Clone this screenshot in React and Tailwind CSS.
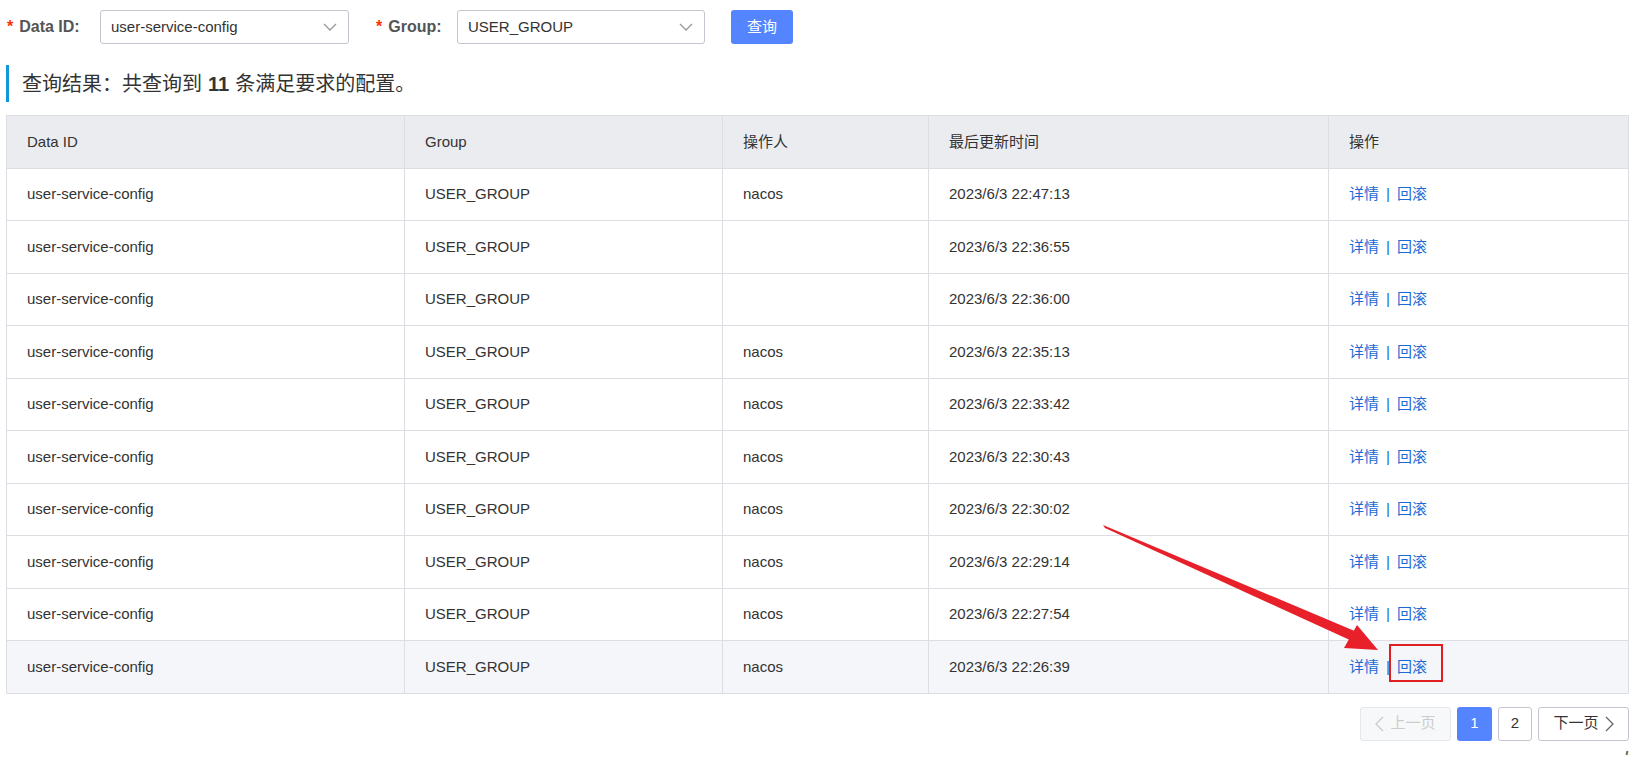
import React from 'react'

const rows = [
  { op: 'nacos', time: '2023/6/3 22:47:13' },
  { op: '', time: '2023/6/3 22:36:55' },
  { op: '', time: '2023/6/3 22:36:00' },
  { op: 'nacos', time: '2023/6/3 22:35:13' },
  { op: 'nacos', time: '2023/6/3 22:33:42' },
  { op: 'nacos', time: '2023/6/3 22:30:43' },
  { op: 'nacos', time: '2023/6/3 22:30:02' },
  { op: 'nacos', time: '2023/6/3 22:29:14' },
  { op: 'nacos', time: '2023/6/3 22:27:54' },
  { op: 'nacos', time: '2023/6/3 22:26:39', hover: true },
]

const Chevron = ({ dir = 'down', className = '' }) => {
  const pts = {
    down: '1,1 7,7 13,1',
    left: '8,1 1,8 8,15',
    right: '1,1 8,8 1,15',
  }[dir]
  const box = dir === 'down' ? '0 0 14 8' : '0 0 9 16'
  return (
    <svg viewBox={box} className={className} fill="none" stroke="currentColor" strokeWidth="1.3">
      <polyline points={pts} />
    </svg>
  )
}

const Select = ({ value, width }) => (
  <div className={`${width} h-[34px] border border-[#c4c6cf] rounded-[3px] flex items-center justify-between pl-[10px] pr-[11px] text-[#333]`}>
    <span>{value}</span>
    <Chevron className="w-[14px] h-[8px] text-[#999]" />
  </div>
)

const cell = 'flex items-center pl-[20px] border-r border-[#dcdee3]'

export default function App() {
  return (
    <div className="relative w-[1652px] h-[757px] bg-white text-[15px] text-[#333] font-['Liberation_Sans','Noto_Sans_CJK_SC',sans-serif]">
      <div className="w-[1623px] ml-[6px] pt-[10px]">
        {/* Search bar */}
        <div className="flex items-center h-[34px]">
          <label className="w-[94px] pl-[1px] text-[16px] font-bold text-[#555]">
            <span className="text-[#ff3000] mr-[6px]">*</span>Data ID:
          </label>
          <Select value="user-service-config" width="w-[249px]" />
          <label className="w-[82px] ml-[26px] pl-[1px] text-[16px] font-bold text-[#555]">
            <span className="text-[#ff3000] mr-[6px]">*</span>Group:
          </label>
          <Select value="USER_GROUP" width="w-[248px]" />
          <button className="ml-[26px] w-[62px] h-[34px] rounded-[3px] bg-[#5584ff] text-white">查询</button>
        </div>

        {/* Result title */}
        <div className="mt-[21px] h-[37px] border-l-[3px] border-[#1296db] pl-[13px] flex items-center text-[20px] text-[#333]">
          查询结果：共查询到 <b className="mx-[6px]">11</b> 条满足要求的配置。
        </div>

        {/* Table */}
        <div className="mt-[13px] border-t border-l border-r border-[#dcdee3]">
          <div className="grid grid-cols-[398px_318px_206px_400px_1fr] h-[52.5px] bg-[#ebecf0] border-b border-[#dcdee3]">
            <div className={cell}>Data ID</div>
            <div className={cell}>Group</div>
            <div className={cell}>操作人</div>
            <div className={cell}>最后更新时间</div>
            <div className="flex items-center pl-[20px]">操作</div>
          </div>
          {rows.map((r, i) => (
            <div
              key={i}
              className={`grid grid-cols-[398px_318px_206px_400px_1fr] h-[52.5px] border-b border-[#dcdee3] ${r.hover ? 'bg-[#f5f6fa]' : 'bg-white'}`}
            >
              <div className={cell}>user-service-config</div>
              <div className={cell}>USER_GROUP</div>
              <div className={cell}>{r.op}</div>
              <div className={cell}>{r.time}</div>
              <div className="flex items-center pl-[20px] text-[#1b6ad6]">
                <span>详情</span>
                <span className="mx-[7px]">|</span>
                <span>回滚</span>
              </div>
            </div>
          ))}
        </div>

        {/* Pagination */}
        <div className="mt-[13px] flex justify-end gap-[6px]">
          <button className="w-[91px] h-[34px] rounded-[3px] border border-[#e6e7eb] bg-[#f7f8fa] text-[#ccc] flex items-center justify-center gap-[6px]">
            <Chevron dir="left" className="w-[9px] h-[16px]" />
            <span>上一页</span>
          </button>
          <button className="w-[35px] h-[34px] rounded-[3px] bg-[#5584ff] text-white">1</button>
          <button className="w-[34px] h-[34px] rounded-[3px] border border-[#c4c6cf] bg-white">2</button>
          <button className="w-[91px] h-[34px] rounded-[3px] border border-[#c4c6cf] bg-white flex items-center justify-center gap-[6px]">
            <span>下一页</span>
            <Chevron dir="right" className="w-[9px] h-[16px] text-[#666]" />
          </button>
        </div>
      </div>

      {/* Annotation: arrow and highlight box */}
      <svg className="absolute left-0 top-0 pointer-events-none" width="1652" height="757">
        <polygon points="1103,525 1105,528 1352,641 1357,632" fill="#e8202a" />
        <polygon points="1378,650 1344,648 1357,625" fill="#e8202a" />
      </svg>
      <div className="absolute left-[1389px] top-[644px] w-[54px] h-[38px] border-2 border-[#e02020]" />
      <div className="absolute left-[1626px] top-[751px] w-[2px] h-[4px] bg-[#7a6a4a] rotate-12" />
    </div>
  )
}
